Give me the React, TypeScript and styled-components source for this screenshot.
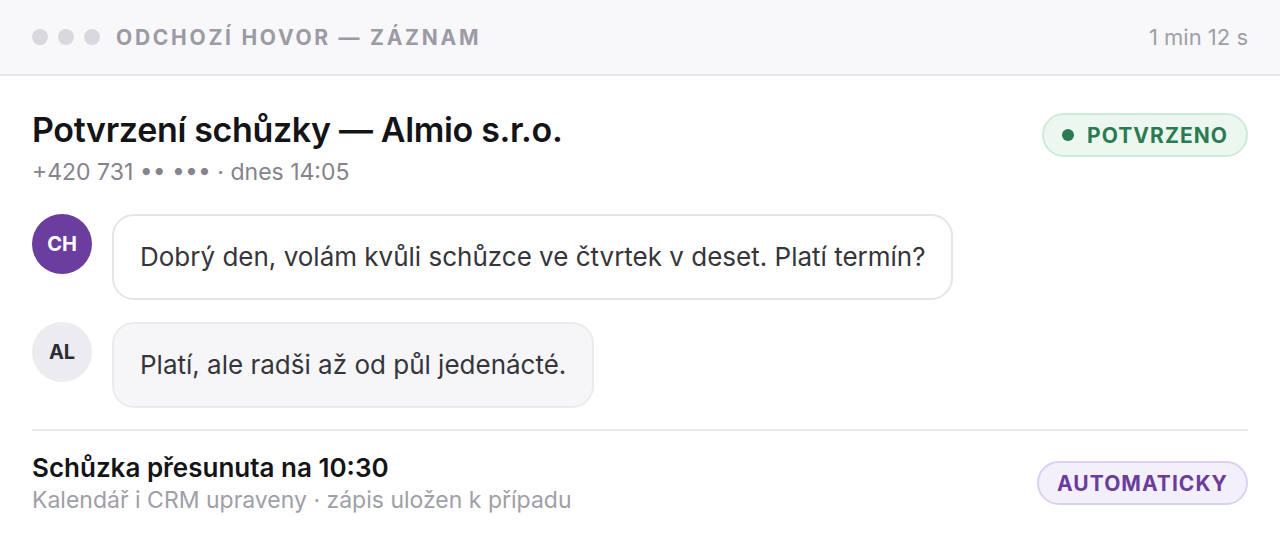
import React from "react";
import styled, { createGlobalStyle } from "styled-components";

const Global = createGlobalStyle`
  html, body { margin: 0; padding: 0; background: #ffffff; }
  body { font-family: Inter, "Noto Sans", sans-serif; -webkit-font-smoothing: antialiased; }
  * { box-sizing: border-box; }
`;

const Page = styled.div`
  width: 1280px;
  height: 538px;
  background: #ffffff;
  display: flex;
  flex-direction: column;
  overflow: hidden;
`;

const TopBar = styled.header`
  height: 76px;
  flex: none;
  display: flex;
  align-items: center;
  justify-content: space-between;
  padding: 0 32px;
  background: #f8f8fa;
  border-bottom: 2px solid #e6e6ea;
`;

const TopLeft = styled.div`
  display: flex;
  align-items: center;
  gap: 16px;
`;

const Dots = styled.div`
  display: flex;
  gap: 10px;
`;

const Dot = styled.span`
  width: 16px;
  height: 16px;
  border-radius: 50%;
  background: #d9d8de;
`;

const Label = styled.div`
  font-size: 21px;
  font-weight: 700;
  letter-spacing: 0.13em;
  color: #9c9aa5;
`;

const Duration = styled.div`
  font-size: 22px;
  color: #a09ea8;
`;

const Body = styled.main`
  flex: 1;
  padding: 30px 32px 0;
  display: flex;
  flex-direction: column;
`;

const HeadRow = styled.div`
  display: flex;
  justify-content: space-between;
  align-items: flex-start;
`;

const TitleBlock = styled.div`
  display: flex;
  flex-direction: column;
  gap: 4px;
`;

const Title = styled.h1`
  margin: 0;
  font-size: 34px;
  line-height: 48px;
  font-weight: 600;
  letter-spacing: -0.01em;
  color: #141417;
`;

const Meta = styled.div`
  font-size: 23px;
  line-height: 28px;
  color: #85838d;
`;

const Pill = styled.div<{ $tone: "green" | "purple"; $offset?: number }>`
  display: inline-flex;
  align-items: center;
  gap: 13px;
  height: 44px;
  margin-top: ${(p) => p.$offset ?? 0}px;
  padding: 0 18px;
  border-radius: 22px;
  font-size: 21px;
  font-weight: 700;
  letter-spacing: 0.05em;
  border: 2px solid ${(p) => (p.$tone === "green" ? "#cfeadb" : "#ddd0ef")};
  background: ${(p) => (p.$tone === "green" ? "#ecf7f0" : "#f4f0fb")};
  color: ${(p) => (p.$tone === "green" ? "#2b7a52" : "#6a3d9c")};
`;

const PillDot = styled.span`
  width: 12px;
  height: 12px;
  border-radius: 50%;
  background: #2b7a52;
`;

const Chat = styled.div`
  margin-top: 28px;
  display: flex;
  flex-direction: column;
  gap: 22px;
`;

const Row = styled.div`
  display: flex;
  align-items: flex-start;
  gap: 20px;
`;

const Avatar = styled.div<{ $me: boolean }>`
  width: 60px;
  height: 60px;
  flex: none;
  border-radius: 50%;
  display: flex;
  align-items: center;
  justify-content: center;
  font-size: 20px;
  font-weight: 700;
  background: ${(p) => (p.$me ? "#6a3d9f" : "#ececf0")};
  color: ${(p) => (p.$me ? "#ffffff" : "#2c2c33")};
`;

const Bubble = styled.div<{ $me: boolean }>`
  padding: 23px 26px;
  border-radius: 22px;
  font-size: 26px;
  line-height: 36px;
  color: #35353b;
  border: 2px solid ${(p) => (p.$me ? "#e5e5e9" : "#ebebee")};
  background: ${(p) => (p.$me ? "#ffffff" : "#f6f6f8")};
`;

const Divider = styled.hr`
  margin: 21px 0 0;
  border: none;
  border-top: 2px solid #ebebee;
`;

const Outcome = styled.div`
  margin-top: 21px;
  display: flex;
  align-items: center;
  justify-content: space-between;
`;

const OutcomeText = styled.div`
  display: flex;
  flex-direction: column;
  gap: 2px;
`;

const OutcomeTitle = styled.div`
  font-size: 26px;
  line-height: 32px;
  font-weight: 600;
  color: #141417;
`;

const OutcomeSub = styled.div`
  font-size: 23px;
  line-height: 28px;
  color: #a09ea8;
`;

const messages = [
  { who: "CH", me: true, text: "Dobrý den, volám kvůli schůzce ve čtvrtek v deset. Platí termín?" },
  { who: "AL", me: false, text: "Platí, ale radši až od půl jedenácté." },
];

export default function App() {
  return (
    <Page>
      <Global />
      <TopBar>
        <TopLeft>
          <Dots>
            <Dot />
            <Dot />
            <Dot />
          </Dots>
          <Label>ODCHOZÍ HOVOR — ZÁZNAM</Label>
        </TopLeft>
        <Duration>1 min 12 s</Duration>
      </TopBar>
      <Body>
        <HeadRow>
          <TitleBlock>
            <Title>Potvrzení schůzky — Almio s.r.o.</Title>
            <Meta>+420 731 •• ••• · dnes 14:05</Meta>
          </TitleBlock>
          <Pill $tone="green" $offset={7}>
            <PillDot />
            POTVRZENO
          </Pill>
        </HeadRow>
        <Chat>
          {messages.map((m) => (
            <Row key={m.who}>
              <Avatar $me={m.me}>{m.who}</Avatar>
              <Bubble $me={m.me}>{m.text}</Bubble>
            </Row>
          ))}
        </Chat>
        <Divider />
        <Outcome>
          <OutcomeText>
            <OutcomeTitle>Schůzka přesunuta na 10:30</OutcomeTitle>
            <OutcomeSub>Kalendář i CRM upraveny · zápis uložen k případu</OutcomeSub>
          </OutcomeText>
          <Pill $tone="purple">AUTOMATICKY</Pill>
        </Outcome>
      </Body>
    </Page>
  );
}
